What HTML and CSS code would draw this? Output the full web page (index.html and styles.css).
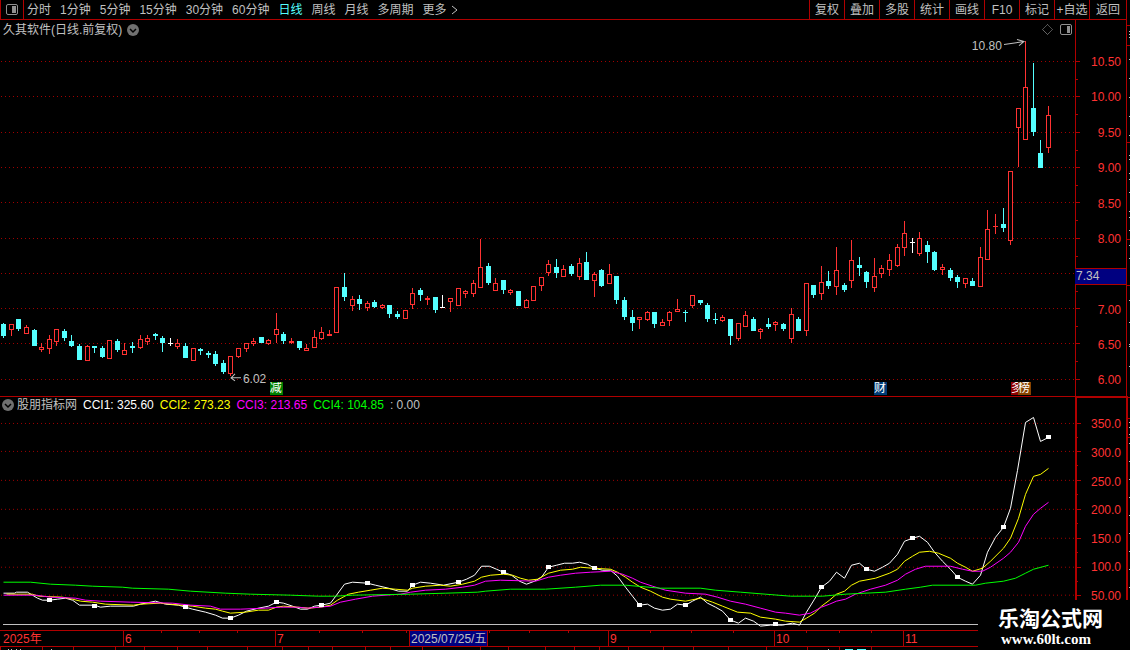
FILE: index.html
```html
<!DOCTYPE html>
<html lang="zh-CN">
<head>
<meta charset="utf-8">
<title>久其软件 日线</title>
<link rel="stylesheet" href="styles.css">
</head>
<body>
<div class="app">
  <div class="workspace">
    <header class="toolbar">
      <button class="layout-toggle" aria-label="切换布局">
        <svg width="14" height="12" viewBox="0 0 14 12"><rect x="1.5" y=".5" width="11" height="10" rx="1.5" fill="none" stroke="#909090"/><rect x="7" y="2" width="4" height="7" fill="#909090"/></svg>
      </button>
      <nav class="periods">
        <button>分时</button><button>1分钟</button><button>5分钟</button><button>15分钟</button><button>30分钟</button><button>60分钟</button><button class="active">日线</button><button>周线</button><button>月线</button><button>多周期</button><button class="more">更多<svg width="7" height="10" viewBox="0 0 7 10"><path d="M1 1l5 4-5 4" fill="none" stroke="#c0c0c0"/></svg></button>
      </nav>
      <div class="tools">
        <button>复权</button><button>叠加</button><button>多股</button><button>统计</button><button>画线</button><button>F10</button><button>标记</button><button>+自选</button><button>返回</button>
      </div>
    </header>

    <section class="panel price">
      <div class="plot">
        <svg class="canvas" id="price-chart" viewBox="0 20 1075 376" preserveAspectRatio="none"></svg>
        <div class="caption">
          <span>久其软件(日线.前复权)</span>
          <button class="round" aria-label="展开"><svg width="12" height="12" viewBox="0 0 12 12"><circle cx="6" cy="6" r="6" fill="#707070"/><path d="M3 5l3 3 3-3" fill="none" stroke="#000" stroke-width="1.5"/></svg></button>
          <div class="corner">
            <svg width="11" height="11" viewBox="0 0 11 11"><path d="M5.500 .5l5 5-5 5-5-5z" fill="none" stroke="#909090" stroke-dasharray="1 .5"/></svg>
            <svg width="13" height="12" viewBox="0 0 13 12"><rect x=".5" y=".5" width="11" height="10" rx="1.500" fill="none" stroke="#909090"/><rect x="7" y="2" width="3" height="7" fill="#909090"/></svg>
          </div>
        </div>
        <span class="note high">10.80</span>
        <span class="note low">6.02</span>
        <span class="badge reduce">减</span>
        <span class="badge finance">财</span>
        <span class="badge multi">多</span>
        <span class="badge rank">榜</span>
      </div>
      <div class="axis">
        <svg class="canvas" id="price-axis" viewBox="1075 20 51 376" preserveAspectRatio="none"></svg>
        <div class="scale"><span>10.50</span><span>10.00</span><span>9.50</span><span>9.00</span><span>8.50</span><span>8.00</span><span></span><span>7.00</span><span>6.50</span><span>6.00</span></div>
        <span class="cursor-price">7.34</span>
      </div>
    </section>

    <section class="panel indicator">
      <div class="plot">
        <svg class="canvas" id="cci-chart" viewBox="0 397 1075 233" preserveAspectRatio="none"></svg>
        <div class="caption readout">
          <button class="round" aria-label="指标菜单"><svg width="12" height="12" viewBox="0 0 12 12"><circle cx="6" cy="6" r="6" fill="#707070"/><path d="M3 5l3 3 3-3" fill="none" stroke="#000" stroke-width="1.5"/></svg></button>
          <div class="values">
            <span>股朋指标网</span>
            <span class="c1">CCI1: 325.60</span>
            <span class="c2">CCI2: 273.23</span>
            <span class="c3">CCI3: 213.65</span>
            <span class="c4">CCI4: 104.85</span>
            <span>: 0.00</span>
          </div>
        </div>
      </div>
      <div class="axis">
        <svg class="canvas" id="cci-axis" viewBox="1075 397 51 233" preserveAspectRatio="none"></svg>
        <div class="scale"><span>350.0</span><span>300.0</span><span>250.0</span><span>200.0</span><span>150.0</span><span>100.0</span><span>50.00</span></div>
      </div>
    </section>

    <footer class="dates">
      <svg class="canvas" id="date-ticks" viewBox="0 631 1126 15" preserveAspectRatio="none"></svg>
      <span>2025年</span><span>6</span><span>7</span><span class="cursor"><b>2025/07/25/五</b></span><span>9</span><span>10</span><span>11</span>
    </footer>
    <svg class="foot" id="foot" viewBox="0 647 1126 3" preserveAspectRatio="none"></svg>
  </div>
  <svg class="edge" id="edge" viewBox="1126 0 4 650" preserveAspectRatio="none"></svg>
  <div class="watermark"><strong>乐淘公式网</strong><span>www.60lt.com</span></div>
</div>
<script src="chart.js"></script>
</body>
</html>
```
FILE: styles.css
```css
* { box-sizing: border-box; }
body {
  margin: 0;
  background: #000;
  color: #c0c0c0;
  font: 12px/14px "Liberation Sans", "Noto Sans CJK SC", sans-serif;
}
button {
  margin: 0;
  padding: 0;
  border: 0;
  background: none;
  color: inherit;
  font: inherit;
  white-space: nowrap;
}
svg { display: block; }
.app { position: relative; display: flex; min-height: 100vh; }
.workspace { flex: 1; min-width: 0; display: flex; flex-direction: column; }
.edge { width: 4px; height: 100vh; }

.toolbar { display: flex; height: 20px; border-bottom: 1px solid #b00000; }
.layout-toggle {
  width: 24px;
  display: flex;
  align-items: center;
  justify-content: center;
  border: solid #b00000;
  border-width: 0 1px;
}
.periods { display: flex; gap: 9px; padding-left: 3px; }
.periods .active { color: #54ffff; }
.periods .more { display: flex; align-items: center; gap: 4px; }
.tools { display: flex; margin-left: auto; }
.tools button { width: 35px; border-left: 1px solid #b00000; }
.tools button:last-child { width: 37px; }

.panel { display: flex; min-height: 0; }
.price { flex: 377 1 0; border-bottom: 1px solid #b00000; }
.indicator { flex: 233 1 0; }
.plot { position: relative; flex: 1; min-width: 0; }
.axis { position: relative; width: 51px; color: #ff3232; }
.canvas { position: absolute; inset: 0; width: 100%; height: 100%; }
.caption {
  position: relative;
  display: flex;
  align-items: center;
  gap: 5px;
  height: 20px;
  padding-left: 3px;
}
.corner { display: flex; gap: 7px; margin-left: auto; padding-right: 2px; }
.readout { height: 16px; padding-left: 2px; gap: 3px; }
.values { display: flex; gap: 6px; }
.c1 { color: #fff; }
.c2 { color: #ff0; }
.c3 { color: #f0f; }
.c4 { color: #0f0; }

.scale {
  position: relative;
  height: 100%;
  display: flex;
  flex-direction: column;
  justify-content: space-between;
  padding-right: 5px;
  text-align: right;
}
.scale span { height: 14px; }
.price .scale { padding-top: 35px; padding-bottom: 9px; }
.indicator .scale { padding-top: 20px; padding-bottom: 27px; }
.cursor-price {
  position: absolute;
  top: 66%;
  left: 0;
  width: 100%;
  height: 17px;
  padding-left: 1px;
  border: solid #b00000;
  border-width: 1px 0;
  background: #000080;
  color: #c0c0c0;
}
.note { position: absolute; }
.high { left: 90.4%; top: 5%; }
.low { left: 22.6%; top: 93.6%; }
.badge {
  position: absolute;
  top: 96.2%;
  width: 13px;
  height: 13px;
  overflow: hidden;
  color: #fff;
  line-height: 13px;
}
.reduce { left: 25.1%; background: #008000; }
.finance { left: 81.3%; background: #003c78; }
.multi { left: 94.05%; width: 7px; background: #900000; }
.rank { left: 94.7%; background: #884400; }

.dates {
  position: relative;
  display: grid;
  grid-template-columns: 123fr 152fr 134fr 199fr 166fr 129fr 223fr;
  height: 17px;
  border: solid #b00000;
  border-width: 1px 0;
  color: #ff3232;
  line-height: 16px;
}
.dates span { height: 15px; border-left: 1px solid #b00000; padding-left: 1px; }
.dates span:first-of-type { border-left: 0; padding-left: 3px; }
.dates .cursor { padding-left: 0; }
.dates b {
  display: block;
  width: max-content;
  height: 15px;
  padding: 0 1px;
  border-right: 1px solid #b00000;
  background: #000080;
  color: #c0c0c0;
  font-weight: normal;
}
.foot { width: 100%; height: 3px; }

.watermark {
  position: absolute;
  right: 0;
  bottom: 0;
  width: 152px;
  height: 50px;
  padding: 7px 0 0 20px;
  background: #000;
  color: #fff;
}
.watermark strong { display: block; font-size: 21px; line-height: 24px; }
.watermark span {
  display: block;
  padding-left: 3px;
  font: bold 15px/16px "Liberation Serif", serif;
}
```
FILE: chart.js
```js
const NS = "http://www.w3.org/2000/svg";
const RED = "#ff3232", CYAN = "#54ffff", FRAME = "#b00000";

function add(id, tag, attrs) {
  const el = document.createElementNS(NS, tag);
  for (const k in attrs) el.setAttribute(k, attrs[k]);
  document.getElementById(id).appendChild(el);
}
function box(id, x, y, w, h, fill) {
  add(id, "rect", { x, y, width: w, height: h, fill, "shape-rendering": "crispEdges" });
}
function grid(id, y) {
  add(id, "line", { x1: 1, x2: 1075, y1: y + 0.5, y2: y + 0.5, stroke: "#a00000", "stroke-dasharray": "1 3", "shape-rendering": "crispEdges" });
}

// Each candle: kind (r up, c down, w flat), high, body top, body bottom, low.
const candles = `c323,324,336,338 r324,324,330,336 c319,319,329,331 r325,327,334,334 c329,330,346,346
r343,347,350,352 r335,339,349,354 r329,329,342,346 c329,331,338,341 c335,341,346,347
c344,346,360,360 r345,346,361,361 c346,346,348,353 c346,348,357,358 r340,340,359,359
c339,341,350,352 r343,350,355,355 c342,346,348,353 r335,339,348,349 r335,338,342,345
c333,334,336,340 c336,338,343,352 w338,343,344,346 r339,343,347,349 c343,346,358,358
r348,348,361,361 c348,349,351,355 c351,353,355,358 c351,354,364,366 c360,363,372,374
r356,356,374,376 r348,348,357,358 r343,343,349,352 r338,341,344,346 c337,337,343,343
r339,340,344,345 r313,329,335,343 c332,334,341,344 r338,341,343,344 c341,341,348,350
r344,348,351,351 r330,337,348,348 r327,332,339,340 r330,334,336,336 r287,287,333,333
c273,287,297,301 r296,299,306,311 c295,299,304,310 r301,303,308,311 c300,302,307,308
r304,305,308,309 c305,305,314,318 c311,314,317,319 r310,310,319,319 r288,293,305,309
c288,290,295,301 r296,298,300,305 c297,297,310,313 w295,307,308,308 r298,298,302,312
r288,288,306,306 r290,291,294,298 r280,283,294,297 r239,267,288,288 c263,266,283,285
r278,283,291,291 c280,280,290,294 r289,290,293,295 c291,291,306,306 r299,300,308,308
r286,286,301,301 r277,277,286,291 r260,264,273,276 c259,267,273,278 r265,269,277,277
c264,266,274,276 r258,263,277,280 c252,262,280,280 r272,274,281,297 c269,270,286,287
r264,274,284,284 c276,276,300,304 c297,300,317,320 c310,317,323,331 r317,317,320,329
r311,312,320,321 c312,312,324,328 r319,322,326,326 r311,312,321,326 r299,309,312,312
c310,312,313,322 r295,295,306,308 c300,300,303,305 c303,305,319,322 c313,319,320,324
r315,317,321,322 c319,319,336,345 r323,323,339,341 r311,315,327,327 c317,319,331,331
r328,329,332,339 c318,324,327,329 r321,322,325,331 c323,324,329,331 r308,314,339,343
c317,319,331,331 r283,283,331,336 c285,285,295,298 r266,282,294,300 c271,281,286,289
r247,270,287,295 c283,285,290,292 r240,260,281,288 c257,265,268,276 c271,272,282,288
r258,276,288,292 r265,268,274,278 r254,260,270,276 r244,247,266,267 r221,233,248,256
w238,242,243,253 r232,238,254,256 c241,245,252,263 c251,252,270,271 r264,267,270,275
c268,270,278,281 c275,277,282,288 r278,278,284,288 c278,281,286,286 r247,257,287,287
r210,229,260,260 r214,226,227,234 c208,224,228,232 r171,171,241,245 r108,108,128,167
r41,87,140,140 c63,108,132,136 c140,153,168,168 r106,115,148,153`.split(/\s+/);

const priceLines = [61, 96, 132, 167, 202, 238, 273, 308, 343, 379];
priceLines.forEach(y => grid("price-chart", y));
candles.forEach((item, i) => {
  const kind = item[0];
  const [hi, top, bottom, lo] = item.slice(1).split(",").map(Number);
  const x = Math.floor(3.8 + 7.57 * i);
  const color = kind === "r" ? RED : kind === "c" ? CYAN : "#fff";
  box("price-chart", x - 2, top, 5, bottom - top, color);
  if (kind === "r" && bottom - top > 2) box("price-chart", x - 1, top + 1, 3, bottom - top - 2, "#000");
  if (top > hi) box("price-chart", x, hi, 1, top - hi, color);
  if (lo > bottom) box("price-chart", x, bottom, 1, lo - bottom, color);
});
add("price-chart", "path", { d: "M241 377.500H231M235 373.500L231 377.500L235 380.500M1004 44.500L1024 41.500M1017 39.500L1024 41.500L1019 45.500", fill: "none", stroke: "#c0c0c0" });

box("price-axis", 1075, 20, 1, 376, FRAME);
priceLines.forEach((y, i) => {
  box("price-axis", 1076, y, 4, 1, FRAME);
  if (i < 9) box("price-axis", 1076, y + 18, 2, 1, FRAME);
});

const cciLines = [423, 451, 480, 509, 538, 567, 595];
cciLines.forEach(y => grid("cci-chart", y));
box("cci-chart", 3, 624, 1072, 1, "#c0c0c0");
const curves = [
  ["#fff", "3,593 14,593 16,592 27,592 32,595 37,598 42,600 49,600 57,599 65,598 72,600 79,605 94,605 100,607 110,606 133,606 140,604 155,601 165,604 178,605 185,607 192,609 205,612 215,615 222,618 230,618 238,615 246,611 258,608 268,606 276,602 283,603 292,606 300,609 307,609 314,606 321,605 330,603 336,595 344,584 352,582 367,583 375,585 388,588 398,591 407,591 412,585 420,582 430,583 443,585 458,582 466,579 474,575 481,566 489,566 496,569 503,572 511,575 519,581 526,584 534,581 541,577 548,567 556,565 564,563 572,563 579,562 587,564 594,568 602,570 610,570 617,576 625,587 632,596 639,605 647,604 654,608 662,610 670,609 677,604 685,605 692,601 700,597 707,603 715,607 722,611 730,620 738,623 745,618 753,621 760,626 770,625 782,625 792,623 799,625 806,612 814,599 821,587 829,581 836,572 844,578 851,565 859,563 866,569 874,571 882,567 889,563 897,554 904,541 912,538 919,536 927,542 934,552 942,561 950,569 957,577 965,581 972,584 980,575 987,552 995,537 1003,527 1010,508 1017,470 1025,422 1033,417 1040,441 1048,437"],
  ["#ff0", "6,594 32,594 38,596 62,597 72,599 80,601 92,602 105,604 133,605 140,604 160,603 180,605 192,606 205,608 215,609 222,611 230,613 245,612 258,610 268,610 276,607 283,606 297,607 308,608 320,607 330,605 337,600 348,594 358,592 370,590 382,588 395,589 407,590 412,588 425,586 440,585 450,586 462,584 474,581 481,577 490,575 503,574 512,575 520,578 528,580 537,579 548,573 560,570 572,569 580,567 592,568 610,569 617,572 625,577 632,582 640,587 650,591 662,597 670,599 685,601 700,598 712,602 722,606 737,612 750,613 760,617 775,619 785,621 799,622 806,618 814,613 821,606 829,600 836,594 844,591 851,585 859,581 875,578 889,573 897,569 904,561 912,556 919,552 929,551 938,553 950,558 957,563 965,567 972,571 982,568 990,561 1003,548 1010,538 1018,518 1025,494 1033,476 1040,474 1048,468"],
  ["#f0f", "3,595 35,595 50,597 75,598 85,600 100,601 130,602 172,603 190,605 210,606 220,609 240,609 265,608 280,607 297,607 307,608 330,606 340,602 355,599 372,596 385,595 400,594 410,592 425,590 445,589 462,587 474,585 485,581 500,580 535,581 548,577 560,575 575,573 590,572 610,571 622,574 632,578 640,582 652,586 665,590 685,593 705,594 717,597 730,601 745,604 760,608 775,612 785,613 799,615 810,613 821,607 829,604 836,601 845,599 855,594 870,589 885,585 897,580 905,574 915,569 925,566 950,566 962,569 972,571 982,571 990,567 1003,558 1010,552 1018,542 1025,526 1033,514 1040,508 1048,502"],
  ["#0f0", "3,582 30,582 50,584 75,585 92,586 122,587 132,588 168,589 190,591 225,593 250,594 290,595 318,596 335,596 352,595 410,594 445,593 477,592 485,591 510,589 545,589 575,587 600,585 625,585 660,588 700,588 715,590 740,592 765,594 790,596 822,596 845,594 885,592 905,589 920,587 932,585 975,585 985,583 1003,581 1015,578 1025,573 1033,569 1048,565"]
];
curves.forEach(([stroke, points]) => add("cci-chart", "polyline", { points, stroke, fill: "none", "shape-rendering": "crispEdges", transform: "translate(0.5 0.5)" }));
[[49, 600], [94, 606], [185, 607], [230, 618], [276, 602], [321, 605], [367, 583], [412, 585], [458, 582], [503, 572], [548, 567], [594, 568], [639, 605], [685, 605], [730, 620], [775, 624], [821, 587], [866, 569], [912, 538], [957, 577], [1003, 527], [1048, 437]]
  .forEach(([x, y]) => box("cci-chart", x - 2, y - 2, 5, 4, "#fff"));

box("cci-axis", 1075, 397, 2, 233, FRAME);
box("cci-axis", 1075, 397, 51, 1, FRAME);
cciLines.forEach(y => {
  box("cci-axis", 1077, y, 4, 1, FRAME);
  box("cci-axis", 1077, y + 14, 1, 1, FRAME);
});

[161, 199, 237, 319, 362, 406, 489, 529, 568, 650, 691, 733, 806, 839, 871].forEach(x => box("date-ticks", x, 631, 1, 2, FRAME));
[0, 42, 73, 115, 144, 177, 207, 247, 282, 308, 332, 365, 390, 422, 480, 508, 545, 574, 599, 628, 663, 693, 728, 766, 807, 839, 871].forEach(x => box("foot", x, 647, 1, 3, FRAME));
[8, 11, 16, 20, 51, 828].forEach(x => box("foot", x, 649, 1, 1, "#c0c0c0"));
box("foot", 845, 649, 8, 1, CYAN);
box("foot", 857, 649, 9, 1, CYAN);

box("edge", 1126, 0, 1, 396, FRAME);
box("edge", 1126, 396, 2, 254, FRAME);
[25, 45, 142, 239, 285, 397, 418, 437].forEach(y => box("edge", 1127, y, 3, 1, FRAME));
[31, 34, 37, 59, 78, 97, 116, 135, 155, 159, 173, 179, 192, 211, 217, 230, 245, 258, 300, 322, 344, 346, 366, 422, 427, 434, 443, 461, 479, 497, 515, 533, 551, 569, 587].forEach(y => box("edge", 1129, y, 1, 1, "#c0c0c0"));
```
